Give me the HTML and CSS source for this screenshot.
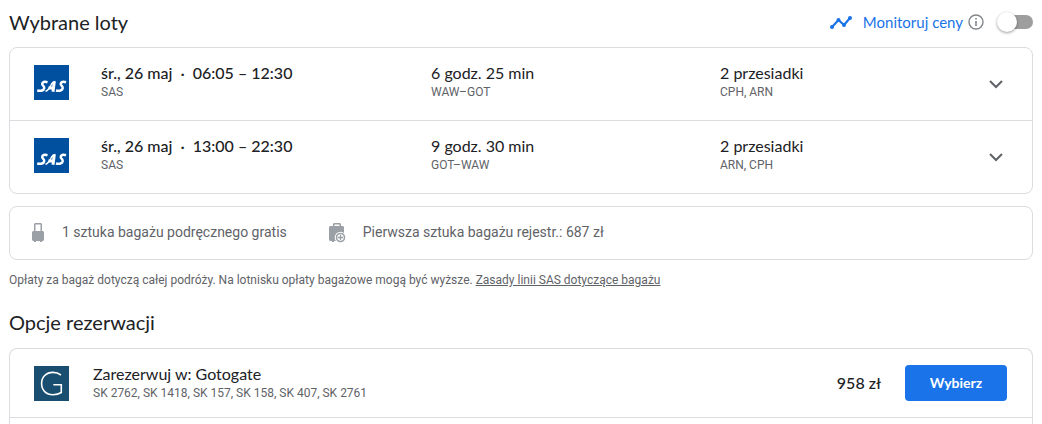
FILE: index.html
```html
<!DOCTYPE html>
<html lang="pl">
<head>
<meta charset="utf-8">
<meta name="viewport" content="width=device-width, initial-scale=1">
<title>Wybrane loty</title>
<link rel="stylesheet" href="styles.css">
</head>
<body>
<main class="page">
  <header class="section-head">
    <h2 class="heading">Wybrane loty</h2>
    <div class="monitor">
      <svg class="trend" viewBox="0 0 24 24" width="24" height="24" aria-hidden="true"><path d="M3 17l6.500-7 5.500 5 6-7" fill="none" stroke="currentColor" stroke-width="2.200"/><circle cx="3" cy="17" r="2"/><circle cx="9.500" cy="10" r="2"/><circle cx="15" cy="15" r="2"/><circle cx="21" cy="8" r="2"/></svg>
      <label class="monitor-label" for="monitor">Monitoruj ceny</label>
      <button class="info" type="button" aria-label="Informacje"><svg viewBox="0 0 16 16" width="16" height="16"><circle cx="8" cy="8" r="7" fill="none" stroke="currentColor" stroke-width="1.4"/><path d="M7.200 7h1.600v5H7.200zM7.200 4h1.600v1.600H7.200z"/></svg></button>
      <input class="switch" type="checkbox" role="switch" id="monitor">
    </div>
  </header>

  <section class="card">
    <div class="flight">
      <svg class="logo" viewBox="0 0 35 35" role="img" aria-label="SAS"><rect width="35" height="35" fill="#00509f"/><g fill="none" stroke="#fff"><path d="M13.500 17.200C10.500 16.200 8.200 17 8.200 18.900c0 1.600 2.400 2.500 2 4.400-.4 2.200-3.200 3.100-7 2.200" stroke-width="2.500"/><path d="M11.500 26.200c2.600-.4 3.900-3.100 5.300-5.700 1-2 2.200-3.600 4.600-3.900" stroke-width="1.500"/><path d="M20.300 16.500l-1.300 10.300M14.500 23h5" stroke-width="3"/><path d="M32 17.200c-3-1-5.300-.2-5.300 1.700 0 1.600 2.400 2.500 2 4.400-.4 2.200-3.200 3.100-6.700 2.200" stroke-width="2.500"/></g></svg>
      <div><div class="title strong">śr., 26 maj &nbsp;·&nbsp; 06:05 – 12:30</div><div class="sub">SAS</div></div>
      <div><div class="title">6 godz. 25 min</div><div class="sub">WAW–GOT</div></div>
      <div><div class="title">2 przesiadki</div><div class="sub">CPH, ARN</div></div>
      <button class="expand" type="button" aria-label="Szczegóły lotu"><svg viewBox="0 0 24 24" width="24" height="24"><path d="M6 9l6 6 6-6" fill="none" stroke="currentColor" stroke-width="2"/></svg></button>
    </div>
    <div class="flight">
      <svg class="logo" viewBox="0 0 35 35" role="img" aria-label="SAS"><rect width="35" height="35" fill="#00509f"/><g fill="none" stroke="#fff"><path d="M13.500 17.200C10.500 16.200 8.200 17 8.200 18.900c0 1.600 2.400 2.500 2 4.400-.4 2.200-3.200 3.100-7 2.200" stroke-width="2.500"/><path d="M11.500 26.200c2.600-.4 3.900-3.100 5.300-5.700 1-2 2.200-3.600 4.600-3.900" stroke-width="1.500"/><path d="M20.300 16.500l-1.300 10.300M14.500 23h5" stroke-width="3"/><path d="M32 17.200c-3-1-5.300-.2-5.300 1.700 0 1.600 2.400 2.500 2 4.400-.4 2.200-3.200 3.100-6.700 2.200" stroke-width="2.500"/></g></svg>
      <div><div class="title strong">śr., 26 maj &nbsp;·&nbsp; 13:00 – 22:30</div><div class="sub">SAS</div></div>
      <div><div class="title">9 godz. 30 min</div><div class="sub">GOT–WAW</div></div>
      <div><div class="title">2 przesiadki</div><div class="sub">ARN, CPH</div></div>
      <button class="expand" type="button" aria-label="Szczegóły lotu"><svg viewBox="0 0 24 24" width="24" height="24"><path d="M6 9l6 6 6-6" fill="none" stroke="currentColor" stroke-width="2"/></svg></button>
    </div>
  </section>

  <section class="card baggage">
    <div class="bag">
      <svg class="bag-icon" viewBox="0 0 20 22" width="20" height="22" aria-hidden="true"><path d="M7 2h6l1 1v7h1l1 1v8l-1 1h-1v1h-2v-1H8v1H6v-1H5l-1-1v-8l1-1h1V3zM7.500 3.500V10h5V3.500z" fill-rule="evenodd"/></svg>
      <span>1 sztuka bagażu podręcznego gratis</span>
    </div>
    <div class="bag">
      <svg class="bag-icon" viewBox="0 0 20 22" width="20" height="22" aria-hidden="true"><path d="M4 5V3l1-1h6l1 1v2h2l1 1v14H5v1H3v-1H1l-1-1V6l1-1zM5.500 5h5V3.500h-5z" fill-rule="evenodd"/><circle cx="11.500" cy="16.500" r="5.800" fill="#fff"/><circle cx="11.500" cy="16.500" r="4" fill="none" stroke="currentColor" stroke-width="1.600"/><path d="M11.500 14v5M9 16.500h5" stroke="currentColor" stroke-width="1.300"/></svg>
      <span>Pierwsza sztuka bagażu rejestr.: 687 zł</span>
    </div>
  </section>
  <p class="note">Opłaty za bagaż dotyczą całej podróży. Na lotnisku opłaty bagażowe mogą być wyższe. <a class="note-link" href="#">Zasady linii SAS dotyczące bagażu</a></p>

  <h2 class="heading">Opcje rezerwacji</h2>
  <section class="card card-open">
    <div class="offer">
      <svg class="logo" viewBox="0 0 35 35" role="img" aria-label="Gotogate"><rect width="35" height="35" fill="#194e70"/><path d="M27 9C24.500 7.200 22 6.400 19 6.400 12 6.400 7.600 11 7.600 17.600S12 28.700 19 28.700c3.400 0 6.200-.8 8.300-2.200v-7.700h-8" fill="none" stroke="#fff" stroke-width="1.600"/></svg>
      <div class="offer-text"><div class="title">Zarezerwuj w: Gotogate</div><div class="sub">SK 2762, SK 1418, SK 157, SK 158, SK 407, SK 2761</div></div>
      <span class="title strong">958 zł</span>
      <button class="select" type="button">Wybierz</button>
    </div>
  </section>
</main>
</body>
</html>
```

FILE: styles.css
```css
* { box-sizing: border-box; }
body {
  margin: 0;
  background: #fff;
  color: #202124;
  font-family: Roboto, "Noto Sans", sans-serif;
}
button { border: 0; padding: 0; background: none; font: inherit; cursor: pointer; }
svg { display: block; fill: currentColor; }

.page {
  display: flex;
  flex-direction: column;
  min-height: 100vh;
  padding: 9px 9px 0;
}
.heading {
  margin: 0;
  font: 400 20px/26px Lato, sans-serif;
}
.section-head {
  display: flex;
  align-items: center;
  justify-content: space-between;
  margin-bottom: 12px;
}
.monitor { display: flex; align-items: center; }
.trend { color: #1a73e8; }
.monitor-label {
  margin: 0 5px 0 10px;
  color: #1a73e8;
  font: 400 15px/20px Lato, sans-serif;
}
.info { color: #80868b; }
.switch {
  appearance: none;
  display: flex;
  align-items: center;
  width: 32px;
  height: 14px;
  margin: 0 0 0 17px;
  border-radius: 7px;
  background: #9e9e9e;
}
.switch::before {
  content: "";
  width: 20px;
  height: 20px;
  flex: none;
  margin-left: -4px;
  border-radius: 50%;
  background: #fff;
  box-shadow: 0 1px 3px rgba(0, 0, 0, .4);
}
.switch:checked { justify-content: flex-end; background: #8ab4f8; }

.card { border: 1px solid #dadce0; border-radius: 8px; }
.flight {
  display: grid;
  grid-template-columns: 67px 330fr 289fr 264fr 24px;
  align-items: center;
  padding: 16px 24px 20px;
}
.flight + .flight { border-top: 1px solid #dadce0; }
.logo { width: 35px; height: 35px; }
.title { font: 400 16px/18px Lato, sans-serif; }
.strong { font-weight: 500; }
.sub { margin-top: 2px; color: #5f6368; font-size: 12px; line-height: 16px; }
.expand { align-self: end; height: 32px; color: #5f6368; }

.baggage {
  display: flex;
  gap: 42px;
  margin-top: 12px;
  padding: 13px 18px 15px;
  color: #5f6368;
  font-size: 14px;
  line-height: 24px;
}
.bag { display: flex; align-items: center; gap: 14px; }
.bag-icon { color: #9aa0a6; }
.note {
  margin: 12px 0 21px;
  color: #5f6368;
  font-size: 12px;
  line-height: 16px;
}
.note-link { color: inherit; }

.card-open {
  flex: 1;
  margin-top: 13px;
  border-bottom: 0;
  border-radius: 8px 8px 0 0;
}
.offer {
  display: flex;
  align-items: center;
  padding: 16px 25px 16px 24px;
  border-bottom: 1px solid #dadce0;
}
.offer-text { flex: 1; margin-left: 24px; }
.select {
  min-width: 102px;
  height: 36px;
  margin-left: 24px;
  border-radius: 4px;
  background: #1a73e8;
  color: #fff;
  font: 700 14px/20px Lato, sans-serif;
}
```
